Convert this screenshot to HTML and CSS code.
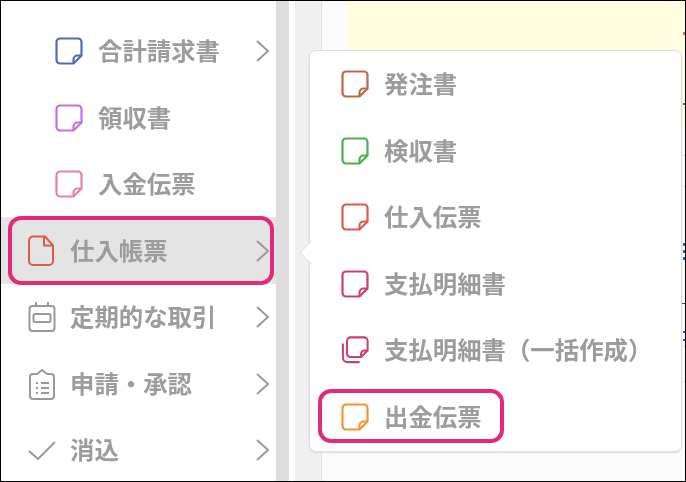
FILE: index.html
```html
<!DOCTYPE html>
<html lang="ja">
<head>
    <meta charset="UTF-8">
    <title>仕入帳票メニュー</title>
    <link rel="stylesheet" href="styles.css">
</head>
<body>
    <svg class="defs" width="0" height="0">
        <symbol id="note" viewBox="0 0 28 28">
            <path d="M5 1.500h18A3.500 3.500 0 0 1 26.500 5v13.500l-8 8H5A3.500 3.500 0 0 1 1.500 23V5A3.500 3.500 0 0 1 5 1.500z"/>
            <path d="M26.500 18.500h-4a4 4 0 0 0-4 4v4"/>
        </symbol>
        <symbol id="chev" viewBox="0 0 16 24">
            <path d="M2 2l11 10L2 22"/>
        </symbol>
    </svg>

    <div class="frame">
        <nav class="sidebar">
            <a class="row sub"><svg class="note blue"><use href="#note"/></svg><span>合計請求書</span><svg class="chev"><use href="#chev"/></svg></a>
            <a class="row sub"><svg class="note purple"><use href="#note"/></svg><span>領収書</span></a>
            <a class="row sub"><svg class="note rose"><use href="#note"/></svg><span>入金伝票</span></a>
            <a class="row active">
                <svg class="icon red" viewBox="0 0 28 32"><path d="M5 1.500h12l8 9V26a4 4 0 0 1-4 4H5a4 4 0 0 1-4-4V5.500a4 4 0 0 1 4-4z"/><path d="M16 1.500v9h9"/></svg>
                <span>仕入帳票</span><svg class="chev"><use href="#chev"/></svg>
                <i class="ring"></i>
            </a>
            <a class="row">
                <svg class="icon" viewBox="0 0 28 32"><rect x="1.500" y="5" width="25" height="25" rx="3"/><rect x="5.500" y="13" width="17" height="8" rx="1.500"/><path d="M8 1v4M20 1v4"/></svg>
                <span>定期的な取引</span><svg class="chev"><use href="#chev"/></svg>
            </a>
            <a class="row">
                <svg class="icon" viewBox="0 0 28 32"><path d="M9 6 14 2l5 4h4a3 3 0 0 1 3 3v19a3 3 0 0 1-3 3H5a3 3 0 0 1-3-3V9a3 3 0 0 1 3-3z"/><path d="M8 15h2M13 15h8M8 20h2M13 20h8M8 25h2M13 25h8"/></svg>
                <span>申請・承認</span><svg class="chev"><use href="#chev"/></svg>
            </a>
            <a class="row">
                <svg class="icon" viewBox="0 0 28 32"><path d="M1 17l9 8L27 8"/></svg>
                <span>消込</span><svg class="chev"><use href="#chev"/></svg>
            </a>
        </nav>
        <div class="scrollbar"></div>
        <div class="gutter"></div>
        <div class="panel"></div>
        <div class="shade"></div>
        <main class="main">
            <div class="banner"></div>
            <div class="sheet"></div>
            <div class="foot"></div>
            <i class="mark m1"></i>
            <i class="mark m2"></i>
            <i class="mark m3"></i>
            <i class="mark m4"></i>
            <i class="mark m5"></i>
            <i class="line l1"></i>
            <i class="line l2"></i>
            <i class="line l3"></i>
            <i class="line l4"></i>
        </main>

        <div class="popover">
            <a class="pop-row"><svg class="note brown"><use href="#note"/></svg><span>発注書</span></a>
            <a class="pop-row"><svg class="note green"><use href="#note"/></svg><span>検収書</span></a>
            <a class="pop-row"><svg class="note red"><use href="#note"/></svg><span>仕入伝票</span></a>
            <a class="pop-row"><svg class="note crimson"><use href="#note"/></svg><span>支払明細書</span></a>
            <a class="pop-row">
                <svg class="note crimson" viewBox="0 0 30 30"><path d="M10 1.500h15A3.500 3.500 0 0 1 28.500 5v10.500l-7 7H10a3.500 3.500 0 0 1-3.500-3.500V5A3.500 3.500 0 0 1 10 1.500z"/><path d="M28.500 15.500h-3.500a3.500 3.500 0 0 0-3.500 3.500v3.500"/><path d="M2 8v15a5 5 0 0 0 5 5h13"/></svg>
                <span>支払明細書（一括作成）</span>
            </a>
            <a class="pop-row"><svg class="note orange"><use href="#note"/></svg><span>出金伝票</span><i class="ring"></i></a>
        </div>
    </div>
</body>
</html>
```

FILE: styles.css
```css
* {
    box-sizing: border-box;
}
body {
    margin: 0;
    font-family: "Noto Sans CJK JP", "Noto Sans", sans-serif;
}
.defs {
    position: absolute;
}
.frame {
    position: relative;
    display: flex;
    width: 686px;
    height: 482px;
    border: 1px solid #000;
    overflow: hidden;
    background: #fff;
}

/* sidebar */
.sidebar {
    width: 275px;
    padding-top: 16.75px;
    flex: none;
}
.row {
    position: relative;
    display: flex;
    align-items: center;
    height: 66.5px;
    padding-left: 27px;
    padding-right: 5px;
    gap: 14px;
    font-size: 24.4px;
    font-weight: 700;
    color: #9c9c9c;
}
.row.sub {
    padding-left: 54px;
    gap: 15px;
}
.row.active {
    background: #e4e4e4;
}
.row span, .pop-row span {
    margin-top: -3px;
    filter: blur(0.7px);
}
.chev {
    width: 16px;
    height: 24px;
    margin-left: auto;
    fill: none;
    stroke: #999;
    stroke-width: 2;
    filter: blur(0.3px);
}
.note {
    width: 28px;
    height: 28px;
    flex: none;
    fill: none;
    stroke: currentColor;
    stroke-width: 2.2;
    filter: blur(0.2px);
}
.icon {
    width: 28px;
    height: 32px;
    flex: none;
    fill: none;
    stroke: #999;
    stroke-width: 2;
    filter: blur(0.3px);
}
.icon.red {
    stroke: #dc5b4b;
}
.blue { color: #4f6db5; }
.purple { color: #c56fe0; }
.rose { color: #e9829f; }
.red { color: #dc5b4b; }
.brown { color: #b9694a; }
.green { color: #4caf50; }
.crimson { color: #c8426c; }
.orange { color: #f39432; }

/* highlight ring on top of a row */
.ring {
    position: absolute;
    border: 4.5px solid #e32a78;
    border-radius: 13px;
    filter: none;
}
.row .ring {
    left: 7px;
    right: 2px;
    top: -1.5px;
    bottom: -1.5px;
}
.pop-row .ring {
    left: 8px;
    top: 5.5px;
    width: 186px;
    height: 54px;
}

/* page behind */
.scrollbar {
    width: 13px;
    flex: none;
    background: #dedede;
}
.gutter {
    width: 6px;
    flex: none;
}
.panel {
    width: 27px;
    flex: none;
    background: #f0f0f0;
    border-right: 1px solid #e4e4e4;
}
.shade {
    width: 25px;
    flex: none;
    background: #fbfbfb;
}
.main {
    position: relative;
    flex: 1;
    display: flex;
    flex-direction: column;
}
.banner {
    height: 127px;
    background: #fffddf;
}
.sheet {
    flex: 1;
    background: #fff;
}
.foot {
    height: 30px;
    background: #fafafa;
}

/* cut-off bits of the page that show past the submenu */
.mark {
    position: absolute;
    right: 0;
    width: 2px;
    background: #2a5ea8;
    filter: blur(0.4px);
}
.m1 { top: 31px; height: 3px; background: #e0607a; }
.m2 { top: 102px; height: 2px; background: #4a5a80; }
.m3 {
    top: 242px;
    height: 20px;
    background: repeating-linear-gradient(#2a5ea8 0 3px, transparent 3px 7px);
}
.m4 { top: 302px; height: 1px; width: 3px; }
.m5 {
    top: 330px;
    height: 11px;
    background: repeating-linear-gradient(#2a5ea8 0 2px, transparent 2px 8px);
}
.line {
    position: absolute;
    right: 0;
    width: 3px;
    height: 1px;
    background: #ddd;
}
.l1 { top: 154px; }
.l2 { top: 185px; }
.l3 { top: 345px; }
.l4 { top: 380px; }

/* submenu */
.popover {
    position: absolute;
    left: 308px;
    top: 49px;
    width: 373px;
    height: 402px;
    background: #fff;
    border: 1px solid #ddd;
    border-radius: 7px;
    box-shadow: 0 1px 2px rgba(0, 0, 0, 0.12);
}
.popover::before {
    content: "";
    position: absolute;
    left: -8px;
    top: 192px;
    width: 18px;
    height: 18px;
    background: #fff;
    border-left: 1px solid #ddd;
    border-bottom: 1px solid #ddd;
    transform: rotate(45deg) scale(0.9);
}
.pop-row {
    position: relative;
    display: flex;
    align-items: center;
    height: 66.5px;
    padding-left: 31px;
    gap: 15px;
    font-size: 24.4px;
    font-weight: 700;
    color: #9c9c9c;
}
```
